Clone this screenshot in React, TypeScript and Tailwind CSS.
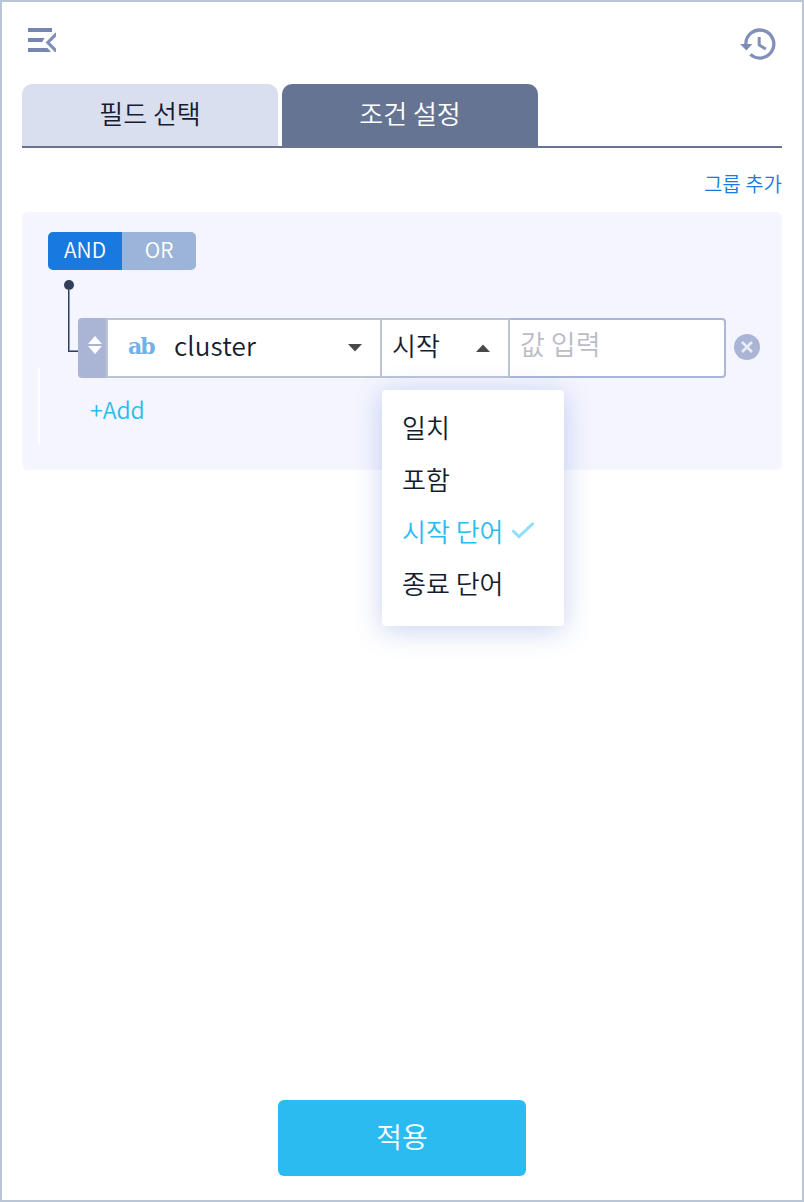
const FIELD_BORDER = "border-[#bcc4d4]";

function MenuIcon() {
  return (
    <svg width="28" height="24" viewBox="0 0 28 24" fill="#7587b0">
      <path d="M0 0h24v4H0zM0 10h16.6l-2.4 4H0zM0 20h19.4l3.6 4H0z" />
      <path d="M28.6 5.6l-8.8 8.9 8.8 9" fill="none" stroke="#7f90b7" strokeWidth="3.2" />
    </svg>
  );
}

function HistoryIcon() {
  return (
    <svg width="36" height="32" viewBox="0 0 36 32" fill="none" stroke="#8090b8">
      <path d="M5.8 16.2A14 14 0 1 1 10.4 26.4" strokeWidth="3.3" />
      <path d="M0 16h12.4l-6 6.4z" fill="#7c8cb4" stroke="none" />
      <path d="M19.2 9v8l6.6 4" strokeWidth="3" />
    </svg>
  );
}

function Connector() {
  return (
    <svg className="shrink-0" width="30" height="108" viewBox="0 0 30 108">
      <circle cx="21" cy="15" r="5" fill="#323f5b" />
      <path d="M20 19h1.2v61.5H30V82H20z" fill="#323f5b" />
      <path d="M21.2 19h.8v61h-.8zM21.2 80H30v.8h-8.8z" fill="#8089a0" />
    </svg>
  );
}

function Caret({ up = false }: { up?: boolean }) {
  return (
    <svg width="14" height="8" viewBox="0 0 14 8" fill="#484848">
      <path d={up ? "M0 8L7 .4l7 7.6z" : "M0 0h14L7 7.6z"} />
    </svg>
  );
}

const options = [
  { label: "일치" },
  { label: "포함" },
  { label: "시작 단어", selected: true },
  { label: "종료 단어" },
];

function OperatorMenu() {
  return (
    <ul className="absolute top-[70px] left-0 z-10 h-[236px] w-[182px] rounded bg-white pt-[10px] text-[26px] shadow-[0_4px_28px_rgba(75,105,210,0.30)]">
      {options.map((o) => (
        <li
          key={o.label}
          className={`flex h-[52px] items-center pl-5 whitespace-nowrap ${o.selected ? "text-[#2abcf0]" : ""}`}
        >
          {o.label}
          {o.selected && (
            <svg className="ml-2" width="24" height="18" viewBox="0 0 24 18" fill="none">
              <path d="M1.5 9.2L8 15.7 22.5 2" stroke="#8cdfff" strokeWidth="3" />
            </svg>
          )}
        </li>
      ))}
    </ul>
  );
}

export default function App() {
  return (
    <div className="flex h-[1202px] w-[804px] flex-col border-2 border-[#bac5d5] bg-white px-5 font-['Noto_Sans_CJK_KR',sans-serif] font-[350] text-[#151c30]">
      <header className="flex h-[82px] items-start justify-between pt-[26px] pr-[6px] pl-[6px]">
        <button aria-label="메뉴">
          <MenuIcon />
        </button>
        <button aria-label="기록">
          <HistoryIcon />
        </button>
      </header>

      <nav className="flex h-16 gap-1 border-b-2 border-[#667595] text-[26px]">
        <button className="w-64 rounded-t-[10px] bg-[#dadff0] pb-[6px]">필드 선택</button>
        <button className="w-64 rounded-t-[10px] bg-[#667494] pb-[6px] text-white">조건 설정</button>
      </nav>

      <div className="flex h-16 items-center justify-end pt-2 text-[20px] text-[#187ae0]">
        <button>그룹 추가</button>
      </div>

      <section className="relative h-[258px] rounded-md bg-[#f4f5fe] pt-5 pl-[26px]">
        <span className="absolute top-[156px] left-4 h-[76px] w-[2px] bg-white" />

        <div className="flex h-[38px] w-[148px] overflow-hidden rounded-[5px] text-[21px] text-white">
          <button className="flex-1 bg-[#187adf] pb-[2px]">AND</button>
          <button className="flex-1 bg-[#9db4d9] pb-[2px]">OR</button>
        </div>

        <div className="flex h-[108px] items-end">
          <Connector />
          <div className="flex h-[60px] w-[648px]">
            <div className="flex w-7 items-center justify-center rounded-l bg-[#aab5d5] pb-[6px] pl-[6px]">
              <svg width="14" height="18" viewBox="0 0 14 18" fill="white">
                <path d="M0 8l7-8 7 8zM0 10h14l-7 8z" />
              </svg>
            </div>
            <div className={`flex w-[276px] items-center border-2 bg-white ${FIELD_BORDER}`}>
              <span className="mb-[5px] ml-5 w-[46px] font-['DejaVu_Serif',serif] text-[22px] leading-none font-bold tracking-[-2px] text-[#6db2ec]">ab</span>
              <span className="pb-[7px] text-[26px] tracking-[0.15px]">cluster</span>
              <span className="mr-[18px] ml-auto">
                <Caret />
              </span>
            </div>
            <div className={`relative flex w-32 items-center border-y-2 border-r-2 bg-white pl-[10px] ${FIELD_BORDER}`}>
              <span className="pb-[7px] text-[26px]">시작</span>
              <span className="mr-[18px] ml-auto">
                <Caret up />
              </span>
              <OperatorMenu />
            </div>
            <input
              aria-label="값"
              placeholder="값 입력"
              className="w-[216px] rounded-r border-y-2 border-r-2 border-[#aab7d8] bg-white pb-[7px] pl-[10px] text-[27px] outline-none placeholder:text-[#bcbcc8]"
            />
          </div>
          <button aria-label="삭제" className="mb-[18px] ml-2">
            <svg width="26" height="26" viewBox="0 0 26 26">
              <circle cx="13" cy="13" r="13" fill="#aab5d5" />
              <path d="M8 8l10 10M18 8L8 18" stroke="#e9edf8" strokeWidth="2.6" />
            </svg>
          </button>
        </div>

        <button className="ml-[42px] block h-16 pb-[2px] text-[23px] text-[#2abcf0]">+Add</button>
      </section>

      <button className="mx-auto mt-auto mb-6 h-[76px] w-[248px] rounded-md bg-[#2abcf0] pb-1 text-[28px] text-white">
        적용
      </button>
    </div>
  );
}
